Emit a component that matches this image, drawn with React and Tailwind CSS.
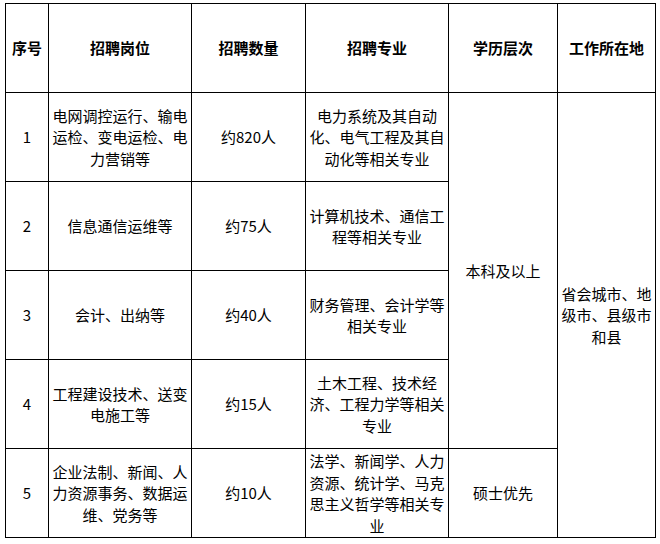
const rows = [
  {
    no: "1",
    post: ["电网调控运行、输电", "运检、变电运检、电", "力营销等"],
    num: "约820人",
    major: ["电力系统及其自动", "化、电气工程及其自", "动化等相关专业"],
  },
  {
    no: "2",
    post: ["信息通信运维等"],
    num: "约75人",
    major: ["计算机技术、通信工", "程等相关专业"],
  },
  {
    no: "3",
    post: ["会计、出纳等"],
    num: "约40人",
    major: ["财务管理、会计学等", "相关专业"],
  },
  {
    no: "4",
    post: ["工程建设技术、送变", "电施工等"],
    num: "约15人",
    major: ["土木工程、技术经", "济、工程力学等相关", "专业"],
  },
  {
    no: "5",
    post: ["企业法制、新闻、人", "力资源事务、数据运", "维、党务等"],
    num: "约10人",
    major: ["法学、新闻学、人力", "资源、统计学、马克", "思主义哲学等相关专", "业"],
  },
];

const Lines = ({ lines }) => (
  <>
    {lines.map((l, i) => (
      <div key={i} className="whitespace-nowrap">
        {l}
      </div>
    ))}
  </>
);

const cell = "border border-black text-center align-middle p-0";

const App = () => {
  return (
    <div
      className="w-[660px] h-[544px] bg-white text-black pt-[3px] pl-[5px]"
      style={{ fontFamily: '"Noto Sans CJK SC", "Noto Sans", sans-serif' }}
    >
      <table className="table-fixed border-collapse w-[650px] text-[15px] leading-[21.5px]">
        <colgroup>
          <col className="w-[43px]" />
          <col className="w-[143px]" />
          <col className="w-[114px]" />
          <col className="w-[143px]" />
          <col className="w-[109px]" />
          <col className="w-[98px]" />
        </colgroup>
        <thead>
          <tr className="h-[89px] font-bold">
            <th className={cell}>序号</th>
            <th className={cell}>招聘岗位</th>
            <th className={cell}>招聘数量</th>
            <th className={cell}>招聘专业</th>
            <th className={cell}>学历层次</th>
            <th className={cell}>工作所在地</th>
          </tr>
        </thead>
        <tbody>
          {rows.map((r, i) => (
            <tr key={r.no} className="h-[89px]">
              <td className={cell}>{r.no}</td>
              <td className={cell}>
                <Lines lines={r.post} />
              </td>
              <td className={cell}>{r.num}</td>
              <td className={cell}>
                <Lines lines={r.major} />
              </td>
              {i === 0 && (
                <td className={cell} rowSpan={4}>
                  本科及以上
                </td>
              )}
              {i === 4 && <td className={cell}>硕士优先</td>}
              {i === 0 && (
                <td className={cell} rowSpan={5}>
                  <Lines lines={["省会城市、地", "级市、县级市", "和县"]} />
                </td>
              )}
            </tr>
          ))}
        </tbody>
      </table>
    </div>
  );
};

export default App;
